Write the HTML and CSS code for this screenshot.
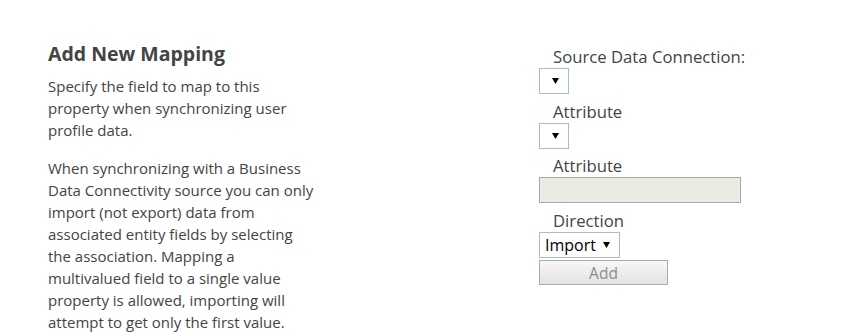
FILE: index.html
```html
<!DOCTYPE html>
<html lang="en">
<head>
    <meta charset="UTF-8">
    <title>Add New Mapping</title>
    <link rel="stylesheet" href="styles.css">
</head>
<body>
    <div class="section">
        <div class="description">
            <h3>Add New Mapping</h3>
            <p>Specify the field to map to this property when synchronizing user profile data.</p>
            <p>When synchronizing with a Business Data Connectivity source you can only import (not export) data from associated entity fields by selecting the association. Mapping a multivalued field to a single value property is allowed, importing will attempt to get only the first value.</p>
        </div>

        <div class="fields">
            <div class="field field-first">
                <label class="field-label">Source Data Connection:</label>
                <div class="select-box select-empty">
                    <select></select>
                    <svg class="arrow" width="7" height="6" viewBox="0 0 7 6"><path d="M0 0h7L3.5 6z" fill="#000"/></svg>
                </div>
            </div>
            <div class="field">
                <label class="field-label">Attribute</label>
                <div class="select-box select-empty">
                    <select></select>
                    <svg class="arrow" width="7" height="6" viewBox="0 0 7 6"><path d="M0 0h7L3.5 6z" fill="#000"/></svg>
                </div>
            </div>
            <div class="field">
                <label class="field-label">Attribute</label>
                <input type="text" class="text-input" disabled>
            </div>
            <div class="field">
                <label class="field-label">Direction</label>
                <div class="select-box select-direction">
                    <select>
                        <option>Import</option>
                    </select>
                    <svg class="arrow" width="7" height="6" viewBox="0 0 7 6"><path d="M0 0h7L3.5 6z" fill="#000"/></svg>
                </div>
                <button class="add-btn" disabled>Add</button>
            </div>
        </div>
    </div>
</body>
</html>
```

FILE: styles.css
```css
body {
    margin: 0;
    background: #fff;
    color: #444;
    font-family: 'Segoe UI', 'Open Sans', sans-serif;
}

.section {
    display: flex;
    padding: 40px 0 0 48px;
}

.description {
    width: 270px;
    flex-shrink: 0;
    font-size: 15px;
    line-height: 22px;
}

.description h3 {
    margin: 0 0 7px 0;
    font-size: 19.5px;
    line-height: 28px;
    font-weight: bold;
}

.description p {
    margin: 0 0 16px 0;
}

.fields {
    margin-left: 221px;
    padding-top: 5px;
}

.field {
    display: flex;
    flex-direction: column;
    align-items: flex-start;
    margin-bottom: 5px;
}

.field-first {
    margin-bottom: 6px;
}

.field-label {
    padding-left: 14px;
    font-size: 16.7px;
    line-height: 23px;
}

.select-box {
    position: relative;
    display: flex;
    align-items: center;
    box-sizing: border-box;
    height: 26px;
    border: 1px solid #a6bccf;
    background: #fff;
}

.select-box select {
    appearance: none;
    -webkit-appearance: none;
    border: none;
    background: transparent;
    font-family: 'Segoe UI', 'Open Sans', sans-serif;
    font-size: 16px;
    color: #000;
    padding: 0 0 0 5px;
    outline: none;
}

.select-box .arrow {
    position: absolute;
    top: 9px;
    pointer-events: none;
}

.select-empty {
    width: 30px;
}

.select-empty select {
    width: 28px;
}

.select-empty .arrow {
    left: 12px;
}

.select-direction {
    width: 81px;
}

.select-direction select {
    width: 79px;
}

.select-direction .arrow {
    left: 63px;
}

.text-input {
    box-sizing: border-box;
    width: 202px;
    height: 26px;
    margin: 0 0 1px 0;
    border: 1px solid #a9a9a9;
    background: #ebeae3;
}

.add-btn {
    box-sizing: border-box;
    width: 129px;
    height: 25px;
    margin-top: 2px;
    border: 1px solid #ababab;
    background: linear-gradient(#f7f7f7, #e3e3e3);
    color: #8c8c8c;
    font-family: 'Segoe UI', 'Open Sans', sans-serif;
    font-size: 15.5px;
    padding: 0;
}
```
